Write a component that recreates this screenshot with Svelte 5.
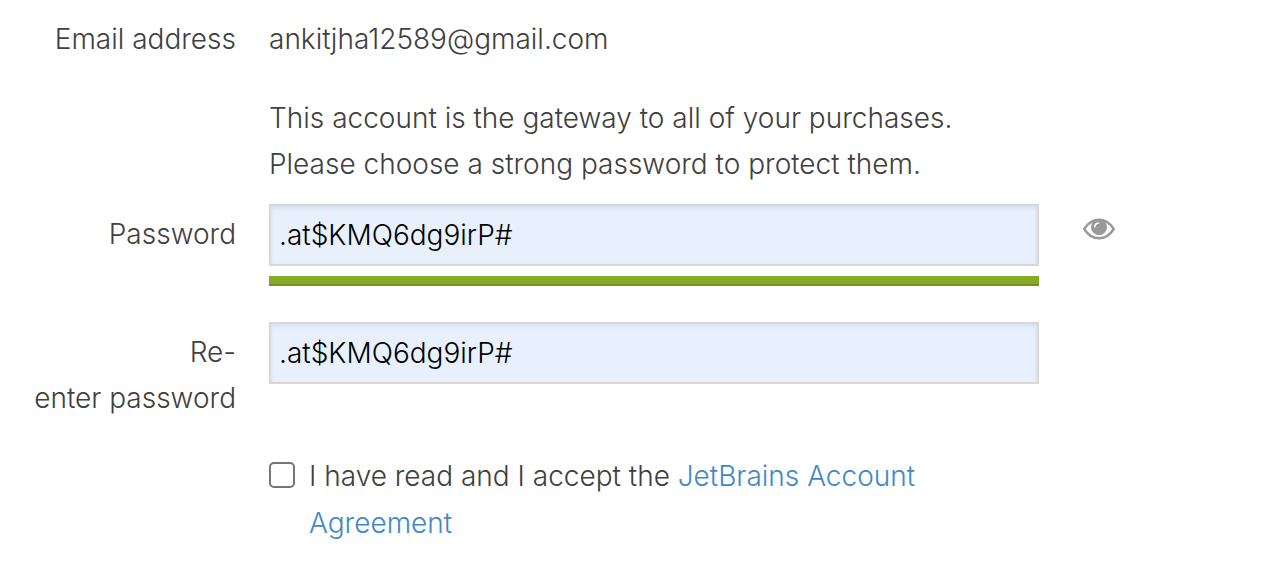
<script lang="ts">
  let password = $state('.at$KMQ6dg9irP#');
  let repeated = $state('.at$KMQ6dg9irP#');
  let visible = $state(true);
  let accepted = $state(false);
</script>

<form>
  <div class="row email">
    <span class="label">Email address</span>
    <span>ankitjha12589@gmail.com</span>
  </div>

  <div class="row hint">
    <p>This account is the gateway to all of your purchases. Please choose a strong password to protect them.</p>
  </div>

  <div class="row password">
    <label class="label beside" for="password">Password</label>
    <div>
      <input id="password" class="text" type={visible ? 'text' : 'password'} bind:value={password} />
      <div class="strength"></div>
    </div>
    <button type="button" aria-label="Toggle password visibility" onclick={() => (visible = !visible)}>
      <svg viewBox="0 0 32 22" width="32" height="22">
        <path d="M1.200 11C5 5 10 1.700 16 1.700S27 5 30.800 11C27 17 22 20.300 16 20.300S5 17 1.200 11Z" fill="none" stroke="#999" stroke-width="2.400" />
        <circle cx="16" cy="9.200" r="8" fill="#999" />
        <path d="M11.800 8.800A4.200 4.200 0 0 1 15.500 5" fill="none" stroke="#fff" stroke-width="1.500" stroke-linecap="round" />
      </svg>
    </button>
  </div>

  <div class="row repeat">
    <label class="label beside" for="repeat">Re-<br />enter password</label>
    <div>
      <input id="repeat" class="text" type={visible ? 'text' : 'password'} bind:value={repeated} />
    </div>
  </div>

  <div class="row">
    <div class="agreement">
      <input id="accept" type="checkbox" bind:checked={accepted} />
      <label for="accept">I have read and I accept the <a href="#agreement">JetBrains Account Agreement</a></label>
    </div>
  </div>
</form>

<style>
  :global(body) {
    background: #fff;
  }
  form {
    padding: 16px 0;
    color: #404040;
    font: 300 28px/46px Inter, sans-serif;
  }
  .row {
    display: grid;
    grid-template-columns: 236fr 770fr 199fr;
    column-gap: 33px;
    align-items: start;
  }
  .label {
    justify-self: end;
    text-align: right;
    white-space: nowrap;
  }
  .beside {
    padding-top: 7px;
  }
  .email {
    margin-bottom: 33px;
  }
  .hint {
    margin-bottom: 17px;
  }
  .hint p,
  .agreement {
    grid-column: 2;
    margin: 0;
  }
  .hint p {
    padding-right: 64px;
  }
  .text {
    display: block;
    box-sizing: border-box;
    width: 100%;
    height: 62px;
    padding: 0 8px;
    border: 2px solid #d8d8d8;
    border-radius: 0;
    background: #e8f0fe;
    box-shadow: inset 0 2px 4px rgba(0, 0, 0, 0.08);
    color: #000;
    font: inherit;
  }
  .strength {
    height: 8px;
    margin-top: 10px;
    border-bottom: 2px solid #70951d;
    background: #84aa26;
  }
  .password {
    margin-bottom: 36px;
  }
  .repeat {
    margin-bottom: 32px;
  }
  button {
    justify-self: start;
    margin-top: 14px;
    padding: 0 11px;
    border: 0;
    background: none;
    cursor: pointer;
  }
  svg {
    display: block;
  }
  .agreement {
    display: flex;
    align-items: flex-start;
    gap: 14px;
    padding-right: 64px;
    line-height: 47px;
  }
  .agreement input {
    flex: none;
    appearance: none;
    width: 26px;
    height: 26px;
    margin: 9px 0 0;
    border: 2px solid #767676;
    border-radius: 5px;
    background: #fff;
  }
  .agreement input:checked {
    background: #4288c9;
    box-shadow: inset 0 0 0 4px #fff;
  }
  a {
    color: #4288c9;
    text-decoration: none;
  }
</style>
